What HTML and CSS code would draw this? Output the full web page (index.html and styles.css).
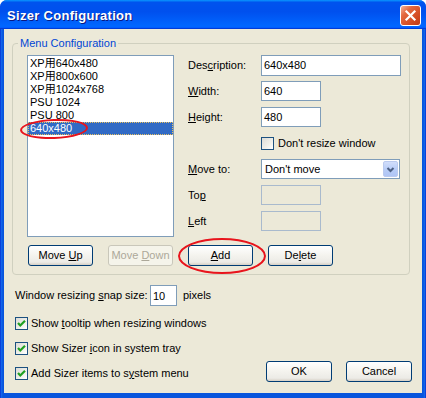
FILE: index.html
```html
<!DOCTYPE html>
<html>
<head>
<meta charset="utf-8">
<link rel="stylesheet" href="styles.css">
</head>
<body>
<div class="window">
  <div class="titlebar">
    <span class="title">Sizer Configuration</span>
    <span class="close"><svg width="21" height="21" viewBox="0 0 21 21"><path d="M6.5 6.5L14.5 14.5M14.5 6.5L6.5 14.5" stroke="#fff" stroke-width="2.2" stroke-linecap="square"/></svg></span>
  </div>
  <div class="client">
    <div class="group">
      <div class="group-title">Menu Configuration</div>
      <div class="group-body">
        <div class="listbox">
          <div class="item">XP用640x480</div>
          <div class="item">XP用800x600</div>
          <div class="item">XP用1024x768</div>
          <div class="item">PSU 1024</div>
          <div class="item">PSU 800</div>
          <div class="item selected">640x480<span class="ellipse ellipse-item"></span></div>
        </div>
        <div class="form">
          <span class="lbl">Des<u>c</u>ription:</span><div class="edit wide">640x480</div>
          <span class="lbl"><u>W</u>idth:</span><div class="edit">640</div>
          <span class="lbl"><u>H</u>eight:</span><div class="edit">480</div>
          <span class="lbl"></span><div class="check-row inline"><span class="checkbox"></span><span>Don't resize window</span></div>
          <span class="lbl"><u>M</u>ove to:</span>
          <div class="combo"><span class="combo-text">Don't move</span><span class="drop"><svg width="15" height="15" viewBox="0 0 15 15"><path d="M4.5 6L7.5 9L10.5 6" fill="none" stroke="#4D6185" stroke-width="2"/></svg></span></div>
          <span class="lbl">To<u>p</u></span><div class="edit disabled"></div>
          <span class="lbl"><u>L</u>eft</span><div class="edit disabled"></div>
        </div>
      </div>
      <div class="group-buttons">
        <div class="btn"><span>Move <u>U</u>p</span></div>
        <div class="btn disabled"><span>Move <u>D</u>own</span></div>
        <div class="btn"><span><u>A</u>dd</span><span class="ellipse ellipse-btn"></span></div>
        <div class="btn"><span>De<u>l</u>ete</span></div>
      </div>
    </div>
    <div class="snap">
      <span class="snap-label">Window resizing <u>s</u>nap size:</span>
      <div class="edit snap-field">10</div>
      <span class="snap-unit">pixels</span>
    </div>
    <div class="bottom">
      <div class="check-row"><span class="checkbox checked"><svg width="11" height="11" viewBox="0 0 11 11"><path d="M2 5L4.3 7.5L9 2.8" fill="none" stroke="#21A121" stroke-width="2.2"/></svg></span><span>Show <u>t</u>ooltip when resizing windows</span></div>
      <div class="check-row"><span class="checkbox checked"><svg width="11" height="11" viewBox="0 0 11 11"><path d="M2 5L4.3 7.5L9 2.8" fill="none" stroke="#21A121" stroke-width="2.2"/></svg></span><span>Show Sizer <u>i</u>con in system tray</span></div>
      <div class="check-row"><span class="checkbox checked"><svg width="11" height="11" viewBox="0 0 11 11"><path d="M2 5L4.3 7.5L9 2.8" fill="none" stroke="#21A121" stroke-width="2.2"/></svg></span><span>Add Sizer items to s<u>y</u>stem menu</span></div>
      <div class="actions">
        <div class="btn wide-btn"><span>OK</span></div>
        <div class="btn wide-btn"><span>Cancel</span></div>
      </div>
    </div>
  </div>
</div>
</body>
</html>
```

FILE: styles.css
```css
* { box-sizing: border-box; }
html, body { margin: 0; padding: 0; background: #fff; }
body {
  font-family: "Liberation Sans", "Noto Sans CJK JP", sans-serif;
  font-size: 11px;
  line-height: 13px;
  color: #000;
}
u { text-decoration: underline; text-underline-offset: 1px; }

.window {
  width: 426px;
  height: 398px;
  display: flex;
  flex-direction: column;
  background: linear-gradient(90deg, #0019C8 0, #166AEE 1px, #0855DD 3px, #0855DD 423px, #166AEE 425px, #0019C8 426px);
  border-radius: 7px 7px 0 0;
  overflow: hidden;
}

.titlebar {
  height: 29px;
  flex: none;
  display: flex;
  align-items: center;
  justify-content: space-between;
  padding: 0 5px 0 7px;
  background: linear-gradient(180deg, #0997ff, #0053ee 8%, #0050ee 40%, #0066ff 88%, #0066ff 93%, #005bff 95%, #003dd7 96%, #003dd7);
}
.title {
  color: #fff;
  font-weight: bold;
  font-size: 13px;
  letter-spacing: 0.3px;
  line-height: 15px;
  padding-top: 2px;
  text-shadow: 1px 1px #0A1883;
}
.close {
  width: 21px;
  height: 21px;
  margin-top: 2px;
  border: 1px solid #fff;
  border-radius: 3px;
  background: linear-gradient(135deg, #F4B49C 0, #E3683F 30%, #D24B22 70%, #C23A15 100%);
  display: flex;
  align-items: center;
  justify-content: center;
}
.close svg { margin: -1px; }

.client {
  flex: 1;
  margin: 0 4px 5px 4px;
  background: #ECE9D8;
  display: flex;
  flex-direction: column;
}

.group {
  margin: 14px 12px 0 8px;
  border: 1px solid #D0D0BF;
  border-radius: 4px;
  padding: 0 8px 8px 14px;
}
.group-title {
  width: fit-content;
  margin: -7px 0 0 -9px;
  padding: 0 2px;
  background: #ECE9D8;
  color: #0046D5;
  line-height: 13px;
}
.group-body {
  margin-top: 5px;
  display: flex;
}
.listbox {
  width: 147px;
  height: 182px;
  flex: none;
  background: #fff;
  border: 1px solid #7F9DB9;
  padding-top: 1px;
}
.item {
  height: 13px;
  line-height: 13px;
  padding-left: 2px;
  white-space: nowrap;
  position: relative;
}
.item.selected {
  background: #316AC5;
  color: #fff;
  outline: 1px dotted #E8C060;
  outline-offset: -1px;
}
.ellipse {
  position: absolute;
  border: 2px solid #E8141C;
  border-radius: 50%;
  pointer-events: none;
}
.ellipse-item {
  left: -8px;
  top: -3px;
  width: 68px;
  height: 20px;
  transform: rotate(-2deg);
}
.ellipse-btn {
  left: -11px;
  top: -8px;
  width: 88px;
  height: 36px;
}

.form {
  margin-left: 14px;
  flex: 1;
  display: grid;
  grid-template-columns: 73px auto;
  grid-auto-rows: 20px;
  row-gap: 6px;
  align-items: center;
  justify-items: start;
}
.lbl { white-space: nowrap; }
.edit {
  width: 60px;
  height: 20px;
  background: #fff;
  border: 1px solid #7F9DB9;
  padding: 2px 2px 0 2px;
  line-height: 14px;
}
.edit.wide { width: 140px; height: 21px; }
.edit.disabled {
  background: #ECE9D8;
  border-color: #A9BACD;
}
.check-row {
  display: flex;
  align-items: center;
  gap: 3px;
  white-space: nowrap;
}
.check-row.inline { gap: 4px; }
.checkbox {
  width: 13px;
  height: 13px;
  flex: none;
  border: 1px solid #1C5180;
  background: linear-gradient(135deg, #DCDCD7 0, #F0F0EA 60%, #FFFFFF 100%);
  display: flex;
  align-items: center;
  justify-content: center;
}
.combo {
  width: 139px;
  height: 20px;
  background: #fff;
  border: 1px solid #7F9DB9;
  display: flex;
  align-items: center;
  justify-content: space-between;
  padding: 0 1px 0 3px;
}
.drop {
  width: 15px;
  height: 16px;
  border-radius: 2px;
  border: 1px solid #BACAEF;
  background: linear-gradient(180deg, #D1DEFB 0, #B9CDF7 50%, #AFC5F5 100%);
  display: flex;
  align-items: center;
  justify-content: center;
}
.drop svg { margin: -1px; }

.group-buttons {
  margin: 8px 0 0 1px;
  display: flex;
  gap: 15px;
}
.btn {
  position: relative;
  width: 65px;
  height: 21px;
  border: 1px solid #003C74;
  border-radius: 3px;
  background: linear-gradient(180deg, #FFFFFF 0, #F4F3EE 50%, #ECEBE6 85%, #D6D0C5 100%);
  display: flex;
  align-items: center;
  justify-content: center;
  white-space: nowrap;
}
.btn.disabled {
  border-color: #C9C7BA;
  background: #F5F4EA;
  color: #ACA899;
}
.btn.wide-btn { width: 66px; }

.snap {
  margin-top: 10px;
  padding-left: 11px;
  height: 21px;
  display: flex;
  align-items: center;
}
.snap-label { width: 135px; white-space: nowrap; }
.snap-field { width: 27px; height: 21px; padding-top: 3px; }
.snap-unit { margin-left: 6px; }

.bottom {
  margin-top: 5px;
  padding: 0 10px 0 11px;
  display: grid;
  grid-template-columns: 1fr auto;
  grid-template-rows: 25px 25px 25px;
}
.bottom .check-row { grid-column: 1; }
.actions {
  grid-column: 2;
  grid-row: 3;
  align-self: start;
  display: flex;
  gap: 14px;
}
```
